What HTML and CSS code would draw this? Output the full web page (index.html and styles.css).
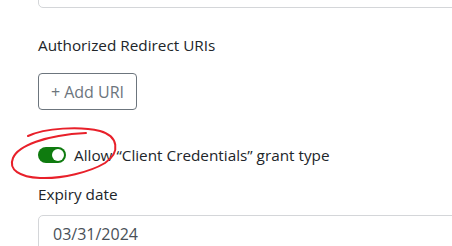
FILE: index.html
```html
<!DOCTYPE html>
<html>
<head>
<meta charset="utf-8">
<link rel="stylesheet" href="styles.css">
</head>
<body>
<div class="form">
  <div class="input top-input"></div>
  <div class="group">
    <div class="label">Authorized Redirect URIs</div>
    <button class="btn">+ Add URI</button>
  </div>
  <div class="switch-row">
    <span class="switch"><span class="knob"></span></span>
    <span class="switch-label">Allow “Client Credentials” grant type</span>
  </div>
  <div class="group2">
    <div class="label">Expiry date</div>
    <div class="input date-input">03/31/2024</div>
  </div>
</div>
<svg class="circle" width="130" height="190" viewBox="0 0 130 190">
  <path d="M28 136 C 45 128, 80 126, 100 131 C 118 136, 121 152, 105 163 C 90 172, 62 179, 40 178 C 20 177, 8 170, 13 158 C 18 146, 45 135, 86 133" fill="none" stroke="#e8202a" stroke-width="2" stroke-linecap="round"/>
</svg>
</body>
</html>
```
FILE: styles.css
```css
html, body {
  margin: 0;
  padding: 0;
  background: #fff;
  overflow: hidden;
}
body {
  width: 452px;
  height: 246px;
  font-family: "Open Sans", "Noto Sans", sans-serif;
  font-size: 15.3px;
  color: #212529;
}
.form {
  padding-left: 38px;
  display: flex;
  flex-direction: column;
}
.input {
  box-sizing: border-box;
  height: 38px;
  margin-right: -20px;
  border: 1px solid #d4d6d9;
  border-radius: 5px;
  background: #fff;
}
.top-input {
  margin-top: -30px;
}
.group {
  margin-top: 26px;
}
.label {
  line-height: 22px;
  height: 22px;
}
.btn {
  margin-top: 17px;
  box-sizing: border-box;
  width: 99px;
  height: 37px;
  border: 1px solid #6c757d;
  border-radius: 4px;
  background: #fff;
  color: #6c757d;
  font-family: inherit;
  font-size: 16px;
  padding: 0;
  display: block;
}
.switch-row {
  margin-top: 34px;
  display: flex;
  align-items: center;
  gap: 8px;
  height: 22px;
}
.switch {
  box-sizing: border-box;
  width: 28px;
  height: 16px;
  border-radius: 8px;
  background: #0f7b0f;
  display: flex;
  align-items: center;
  justify-content: flex-end;
  padding-right: 2px;
}
.knob {
  width: 12px;
  height: 12px;
  border-radius: 50%;
  background: #fff;
}
.circle {
  position: absolute;
  left: 0;
  top: 0;
}
.group2 {
  margin-top: 17px;
}
.date-input {
  margin-top: 10px;
  padding-left: 14px;
  line-height: 36px;
  font-size: 16px;
  color: #495057;
}
```
